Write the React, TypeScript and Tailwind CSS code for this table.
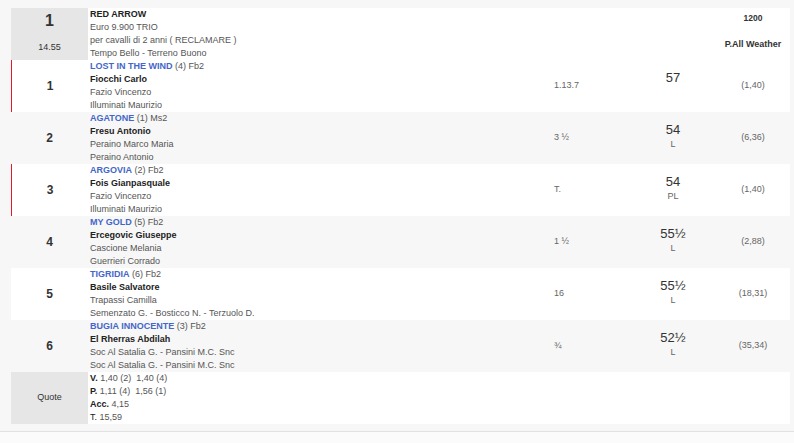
type Runner = {
  pos: string;
  horse: string;
  extra: string;
  jockey: string;
  trainer: string;
  owner: string;
  dist: string;
  weight: string;
  sub: string;
  odds: string;
  mark?: boolean;
};

const RUNNERS: Runner[] = [
  { pos: "1", horse: "LOST IN THE WIND", extra: "(4) Fb2", jockey: "Fiocchi Carlo", trainer: "Fazio Vincenzo", owner: "Illuminati Maurizio", dist: "1.13.7", weight: "57", sub: "", odds: "(1,40)", mark: true },
  { pos: "2", horse: "AGATONE", extra: "(1) Ms2", jockey: "Fresu Antonio", trainer: "Peraino Marco Maria", owner: "Peraino Antonio", dist: "3 ½", weight: "54", sub: "L", odds: "(6,36)" },
  { pos: "3", horse: "ARGOVIA", extra: "(2) Fb2", jockey: "Fois Gianpasquale", trainer: "Fazio Vincenzo", owner: "Illuminati Maurizio", dist: "T.", weight: "54", sub: "PL", odds: "(1,40)", mark: true },
  { pos: "4", horse: "MY GOLD", extra: "(5) Fb2", jockey: "Ercegovic Giuseppe", trainer: "Cascione Melania", owner: "Guerrieri Corrado", dist: "1 ½", weight: "55½", sub: "L", odds: "(2,88)" },
  { pos: "5", horse: "TIGRIDIA", extra: "(6) Fb2", jockey: "Basile Salvatore", trainer: "Trapassi Camilla", owner: "Semenzato G. - Bosticco N. - Terzuolo D.", dist: "16", weight: "55½", sub: "L", odds: "(18,31)" },
  { pos: "6", horse: "BUGIA INNOCENTE", extra: "(3) Fb2", jockey: "El Rherras Abdilah", trainer: "Soc Al Satalia G. - Pansini M.C. Snc", owner: "Soc Al Satalia G. - Pansini M.C. Snc", dist: "¾", weight: "52½", sub: "L", odds: "(35,34)" },
];

const grid = "grid grid-cols-[77px_466px_76px_86px_74px] h-[52px]";

const RunnerRow = ({ r, idx }: { r: Runner; idx: number }) => (
  <div className={`${grid} ${idx % 2 === 1 ? "bg-[#f7f7f7]" : "bg-white"}`}>
    <div
      className={`flex items-center justify-center text-[12px] font-bold text-[#333] ${
        r.mark ? "border-l border-[#e01b2b]" : ""
      }`}
    >
      {r.pos}
    </div>
    <div className="pl-[2px] text-[9px] leading-[13px] text-[#555]">
      <div>
        <span className="font-bold text-[#4466c8]">{r.horse}</span> {r.extra}
      </div>
      <div className="font-bold text-[#222]">{r.jockey}</div>
      <div>{r.trainer}</div>
      <div>{r.owner}</div>
    </div>
    <div className="flex items-center text-[9px] text-[#666]">{r.dist}</div>
    <div className="flex flex-col items-center justify-center pb-[3px]">
      <span className="text-[13px] leading-[16px] text-[#333]">{r.weight}</span>
      <span className="text-[9px] leading-[13px] text-[#666]">{r.sub || "\u00a0"}</span>
    </div>
    <div className="flex items-center justify-center text-[9px] text-[#666]">{r.odds}</div>
  </div>
);

export default function App() {
  return (
    <div className="min-h-screen bg-[#f7f7f7] font-[family-name:'Liberation_Sans',Arial,sans-serif]">
      <div className="pt-[8px] pl-[11px]">
        <div className="w-[779px]">
          {/* race header */}
          <div className={`${grid} bg-white`}>
            <div className="flex flex-col items-center bg-[#e6e6e6] text-[#333]">
              <span className="mt-[3px] text-[16px] font-bold leading-[20px]">1</span>
              <span className="mt-[10px] text-[9px] leading-[13px]">14.55</span>
            </div>
            <div className="pl-[2px] text-[9px] leading-[13px] text-[#555]">
              <div className="font-bold text-[#222]">RED ARROW</div>
              <div>Euro 9.900 TRIO</div>
              <div>per cavalli di 2 anni ( RECLAMARE )</div>
              <div>Tempo Bello - Terreno Buono</div>
            </div>
            <div />
            <div />
            <div className="flex flex-col items-center pt-[4px] text-[#333]">
              <span className="text-[8.5px] font-bold leading-[13px]">1200</span>
              <span className="mt-[13px] text-[9px] font-bold leading-[13px]">P.All Weather</span>
            </div>
          </div>

          {RUNNERS.map((r, i) => (
            <RunnerRow key={r.pos} r={r} idx={i} />
          ))}

          {/* quote */}
          <div className={`${grid} bg-white`}>
            <div className="flex items-center justify-center bg-[#e6e6e6] text-[9px] text-[#333]">Quote</div>
            <div className="pl-[2px] text-[9px] leading-[13px] text-[#555]">
              <div>
                <b className="text-[#222]">V.</b> 1,40 (2)&nbsp; 1,40 (4)
              </div>
              <div>
                <b className="text-[#222]">P.</b> 1,11 (4)&nbsp; 1,56 (1)
              </div>
              <div>
                <b className="text-[#222]">Acc.</b> 4,15
              </div>
              <div>
                <span className="text-[#222]">T.</span> 15,59
              </div>
            </div>
          </div>
        </div>
      </div>
      <div className="mt-[7px] border-t border-[#e2e2e2] bg-[#fbfbfb] h-[12px]" />
    </div>
  );
}
